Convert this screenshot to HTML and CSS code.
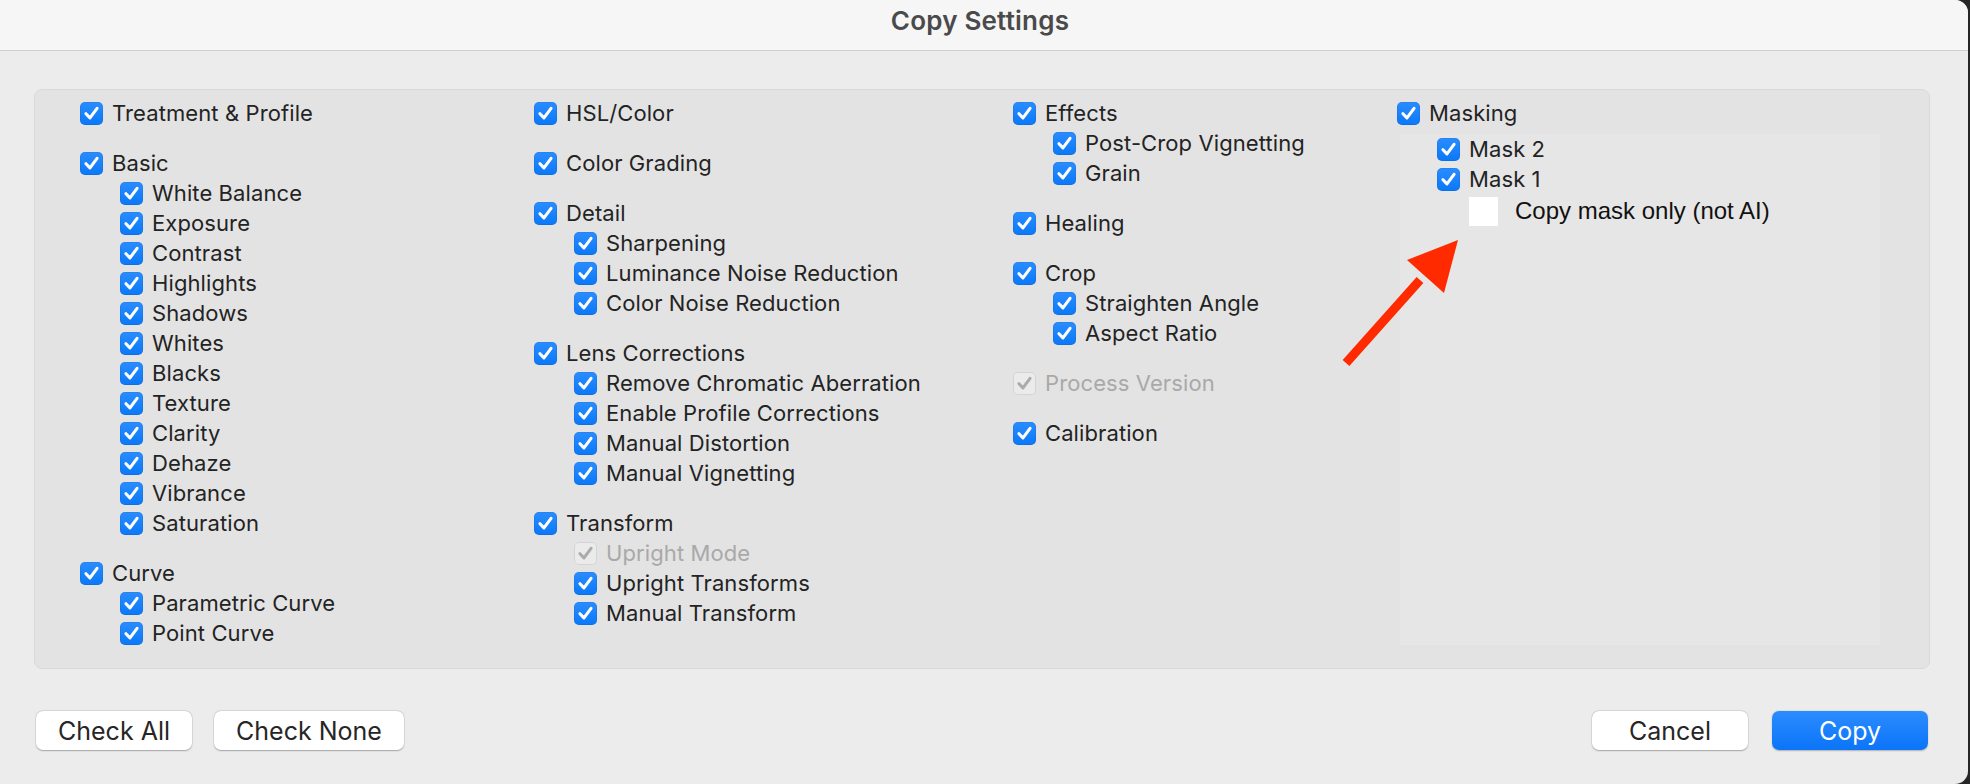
FILE: index.html
```html
<!DOCTYPE html>
<html>
<head>
<meta charset="utf-8">
<link rel="stylesheet" href="styles.css">
</head>
<body>
<div class="window">
  <div class="titlebar"><span class="title">Copy Settings</span></div>
  <div class="content">
    <div class="panel">
      <div class="col">
        <div class="group">
          <div class="row"><span class="cb"><svg viewBox="0 0 24 24"><path d="M6.2 12.2 L10.4 16.6 L17.8 6.6"/></svg></span><span class="lbl">Treatment &amp; Profile</span></div>
        </div>
        <div class="group">
          <div class="row"><span class="cb"><svg viewBox="0 0 24 24"><path d="M6.2 12.2 L10.4 16.6 L17.8 6.6"/></svg></span><span class="lbl">Basic</span></div>
          <div class="sub">
            <div class="row"><span class="cb"><svg viewBox="0 0 24 24"><path d="M6.2 12.2 L10.4 16.6 L17.8 6.6"/></svg></span><span class="lbl">White Balance</span></div>
            <div class="row"><span class="cb"><svg viewBox="0 0 24 24"><path d="M6.2 12.2 L10.4 16.6 L17.8 6.6"/></svg></span><span class="lbl">Exposure</span></div>
            <div class="row"><span class="cb"><svg viewBox="0 0 24 24"><path d="M6.2 12.2 L10.4 16.6 L17.8 6.6"/></svg></span><span class="lbl">Contrast</span></div>
            <div class="row"><span class="cb"><svg viewBox="0 0 24 24"><path d="M6.2 12.2 L10.4 16.6 L17.8 6.6"/></svg></span><span class="lbl">Highlights</span></div>
            <div class="row"><span class="cb"><svg viewBox="0 0 24 24"><path d="M6.2 12.2 L10.4 16.6 L17.8 6.6"/></svg></span><span class="lbl">Shadows</span></div>
            <div class="row"><span class="cb"><svg viewBox="0 0 24 24"><path d="M6.2 12.2 L10.4 16.6 L17.8 6.6"/></svg></span><span class="lbl">Whites</span></div>
            <div class="row"><span class="cb"><svg viewBox="0 0 24 24"><path d="M6.2 12.2 L10.4 16.6 L17.8 6.6"/></svg></span><span class="lbl">Blacks</span></div>
            <div class="row"><span class="cb"><svg viewBox="0 0 24 24"><path d="M6.2 12.2 L10.4 16.6 L17.8 6.6"/></svg></span><span class="lbl">Texture</span></div>
            <div class="row"><span class="cb"><svg viewBox="0 0 24 24"><path d="M6.2 12.2 L10.4 16.6 L17.8 6.6"/></svg></span><span class="lbl">Clarity</span></div>
            <div class="row"><span class="cb"><svg viewBox="0 0 24 24"><path d="M6.2 12.2 L10.4 16.6 L17.8 6.6"/></svg></span><span class="lbl">Dehaze</span></div>
            <div class="row"><span class="cb"><svg viewBox="0 0 24 24"><path d="M6.2 12.2 L10.4 16.6 L17.8 6.6"/></svg></span><span class="lbl">Vibrance</span></div>
            <div class="row"><span class="cb"><svg viewBox="0 0 24 24"><path d="M6.2 12.2 L10.4 16.6 L17.8 6.6"/></svg></span><span class="lbl">Saturation</span></div>
          </div>
        </div>
        <div class="group">
          <div class="row"><span class="cb"><svg viewBox="0 0 24 24"><path d="M6.2 12.2 L10.4 16.6 L17.8 6.6"/></svg></span><span class="lbl">Curve</span></div>
          <div class="sub">
            <div class="row"><span class="cb"><svg viewBox="0 0 24 24"><path d="M6.2 12.2 L10.4 16.6 L17.8 6.6"/></svg></span><span class="lbl">Parametric Curve</span></div>
            <div class="row"><span class="cb"><svg viewBox="0 0 24 24"><path d="M6.2 12.2 L10.4 16.6 L17.8 6.6"/></svg></span><span class="lbl">Point Curve</span></div>
          </div>
        </div>
      </div>

      <div class="col">
        <div class="group">
          <div class="row"><span class="cb"><svg viewBox="0 0 24 24"><path d="M6.2 12.2 L10.4 16.6 L17.8 6.6"/></svg></span><span class="lbl">HSL/Color</span></div>
        </div>
        <div class="group">
          <div class="row"><span class="cb"><svg viewBox="0 0 24 24"><path d="M6.2 12.2 L10.4 16.6 L17.8 6.6"/></svg></span><span class="lbl">Color Grading</span></div>
        </div>
        <div class="group">
          <div class="row"><span class="cb"><svg viewBox="0 0 24 24"><path d="M6.2 12.2 L10.4 16.6 L17.8 6.6"/></svg></span><span class="lbl">Detail</span></div>
          <div class="sub">
            <div class="row"><span class="cb"><svg viewBox="0 0 24 24"><path d="M6.2 12.2 L10.4 16.6 L17.8 6.6"/></svg></span><span class="lbl">Sharpening</span></div>
            <div class="row"><span class="cb"><svg viewBox="0 0 24 24"><path d="M6.2 12.2 L10.4 16.6 L17.8 6.6"/></svg></span><span class="lbl">Luminance Noise Reduction</span></div>
            <div class="row"><span class="cb"><svg viewBox="0 0 24 24"><path d="M6.2 12.2 L10.4 16.6 L17.8 6.6"/></svg></span><span class="lbl">Color Noise Reduction</span></div>
          </div>
        </div>
        <div class="group">
          <div class="row"><span class="cb"><svg viewBox="0 0 24 24"><path d="M6.2 12.2 L10.4 16.6 L17.8 6.6"/></svg></span><span class="lbl">Lens Corrections</span></div>
          <div class="sub">
            <div class="row"><span class="cb"><svg viewBox="0 0 24 24"><path d="M6.2 12.2 L10.4 16.6 L17.8 6.6"/></svg></span><span class="lbl">Remove Chromatic Aberration</span></div>
            <div class="row"><span class="cb"><svg viewBox="0 0 24 24"><path d="M6.2 12.2 L10.4 16.6 L17.8 6.6"/></svg></span><span class="lbl">Enable Profile Corrections</span></div>
            <div class="row"><span class="cb"><svg viewBox="0 0 24 24"><path d="M6.2 12.2 L10.4 16.6 L17.8 6.6"/></svg></span><span class="lbl">Manual Distortion</span></div>
            <div class="row"><span class="cb"><svg viewBox="0 0 24 24"><path d="M6.2 12.2 L10.4 16.6 L17.8 6.6"/></svg></span><span class="lbl">Manual Vignetting</span></div>
          </div>
        </div>
        <div class="group">
          <div class="row"><span class="cb"><svg viewBox="0 0 24 24"><path d="M6.2 12.2 L10.4 16.6 L17.8 6.6"/></svg></span><span class="lbl">Transform</span></div>
          <div class="sub">
            <div class="row disabled"><span class="cb"><svg viewBox="0 0 24 24"><path d="M6.2 12.2 L10.4 16.6 L17.8 6.6"/></svg></span><span class="lbl">Upright Mode</span></div>
            <div class="row"><span class="cb"><svg viewBox="0 0 24 24"><path d="M6.2 12.2 L10.4 16.6 L17.8 6.6"/></svg></span><span class="lbl">Upright Transforms</span></div>
            <div class="row"><span class="cb"><svg viewBox="0 0 24 24"><path d="M6.2 12.2 L10.4 16.6 L17.8 6.6"/></svg></span><span class="lbl">Manual Transform</span></div>
          </div>
        </div>
      </div>

      <div class="col">
        <div class="group">
          <div class="row"><span class="cb"><svg viewBox="0 0 24 24"><path d="M6.2 12.2 L10.4 16.6 L17.8 6.6"/></svg></span><span class="lbl">Effects</span></div>
          <div class="sub">
            <div class="row"><span class="cb"><svg viewBox="0 0 24 24"><path d="M6.2 12.2 L10.4 16.6 L17.8 6.6"/></svg></span><span class="lbl">Post-Crop Vignetting</span></div>
            <div class="row"><span class="cb"><svg viewBox="0 0 24 24"><path d="M6.2 12.2 L10.4 16.6 L17.8 6.6"/></svg></span><span class="lbl">Grain</span></div>
          </div>
        </div>
        <div class="group">
          <div class="row"><span class="cb"><svg viewBox="0 0 24 24"><path d="M6.2 12.2 L10.4 16.6 L17.8 6.6"/></svg></span><span class="lbl">Healing</span></div>
        </div>
        <div class="group">
          <div class="row"><span class="cb"><svg viewBox="0 0 24 24"><path d="M6.2 12.2 L10.4 16.6 L17.8 6.6"/></svg></span><span class="lbl">Crop</span></div>
          <div class="sub">
            <div class="row"><span class="cb"><svg viewBox="0 0 24 24"><path d="M6.2 12.2 L10.4 16.6 L17.8 6.6"/></svg></span><span class="lbl">Straighten Angle</span></div>
            <div class="row"><span class="cb"><svg viewBox="0 0 24 24"><path d="M6.2 12.2 L10.4 16.6 L17.8 6.6"/></svg></span><span class="lbl">Aspect Ratio</span></div>
          </div>
        </div>
        <div class="group">
          <div class="row disabled"><span class="cb"><svg viewBox="0 0 24 24"><path d="M6.2 12.2 L10.4 16.6 L17.8 6.6"/></svg></span><span class="lbl">Process Version</span></div>
        </div>
        <div class="group">
          <div class="row"><span class="cb"><svg viewBox="0 0 24 24"><path d="M6.2 12.2 L10.4 16.6 L17.8 6.6"/></svg></span><span class="lbl">Calibration</span></div>
        </div>
      </div>

      <div class="col col-mask">
        <div class="row"><span class="cb"><svg viewBox="0 0 24 24"><path d="M6.2 12.2 L10.4 16.6 L17.8 6.6"/></svg></span><span class="lbl">Masking</span></div>
        <div class="maskbox">
          <div class="row"><span class="cb"><svg viewBox="0 0 24 24"><path d="M6.2 12.2 L10.4 16.6 L17.8 6.6"/></svg></span><span class="lbl">Mask 2</span></div>
          <div class="row"><span class="cb"><svg viewBox="0 0 24 24"><path d="M6.2 12.2 L10.4 16.6 L17.8 6.6"/></svg></span><span class="lbl">Mask 1</span></div>
          <div class="row-plain"><span class="whitebox"></span><span class="plain-lbl">Copy mask only (not AI)</span></div>
        </div>
      </div>
    </div>
  </div>
  <div class="footer">
    <div class="btns">
      <button class="btn w-all">Check All</button>
      <button class="btn w-none">Check None</button>
    </div>
    <div class="btns">
      <button class="btn w-std">Cancel</button>
      <button class="btn w-std primary">Copy</button>
    </div>
  </div>
  <svg class="arrow" viewBox="0 0 140 145" width="140" height="145">
    <line x1="16" y1="133" x2="90" y2="50" stroke="#ff2a00" stroke-width="9"/>
    <polygon points="128,10 77,30 114,63" fill="#ff2a00"/>
  </svg>
</div>
</body>
</html>
```

FILE: styles.css
```css
* { box-sizing: border-box; }
html, body { margin: 0; padding: 0; }
body {
  background: #262626;
  width: 1970px;
  height: 784px;
  overflow: hidden;
  font-family: "Inter", "Liberation Sans", sans-serif;
}
.window {
  position: relative;
  width: 1968px;
  height: 784px;
  background: #ececec;
  border-top-right-radius: 13px;
  border-bottom-right-radius: 13px;
  overflow: hidden;
  display: flex;
  flex-direction: column;
}
.titlebar {
  height: 51px;
  background: #f6f6f6;
  border-bottom: 1px solid #cfcfcf;
  display: flex;
  justify-content: center;
  padding-top: 5px;
  flex: none;
}
.title {
  font-size: 26px;
  font-weight: 600;
  color: #4a4a4a;
  line-height: 32px;
  padding-right: 8px;
  letter-spacing: 0.2px;
}
.content {
  padding: 38px 38px 0 34px;
  flex: none;
}
.panel {
  height: 580px;
  background: #e3e3e3;
  border: 1px solid #d9d9d9;
  border-radius: 8px;
  padding: 8px 0 0 45px;
  display: grid;
  grid-template-columns: 454px 479px 384px 1fr;
}
.col { display: flex; flex-direction: column; gap: 20px; }
.group { display: flex; flex-direction: column; }
.sub { padding-left: 40px; display: flex; flex-direction: column; }
.row {
  height: 30px;
  display: flex;
  align-items: center;
  gap: 9px;
}
.cb {
  width: 23px;
  height: 23px;
  border-radius: 5px;
  background: linear-gradient(#2a8dff, #0b78f7);
  box-shadow: inset 0 0 0 0.5px rgba(0,0,0,0.12);
  flex: none;
  display: flex;
}
.cb svg { width: 23px; height: 23px; }
.cb path {
  fill: none;
  stroke: #fff;
  stroke-width: 3.2;
  stroke-linecap: round;
  stroke-linejoin: round;
}
.lbl {
  font-size: 22px;
  color: #232323;
  white-space: nowrap;
  letter-spacing: 0.1px;
}
.disabled .cb {
  background: #ebebeb;
  box-shadow: inset 0 0 0 1px #d4d4d4;
}
.disabled .cb path { stroke: #ababab; }
.disabled .lbl { color: #a9a9a9; }

.col-mask { gap: 6px; }
.maskbox {
  margin-left: 3px;
  width: 480px;
  height: 511px;
  background: #e6e6e6;
  padding-left: 37px;
  display: flex;
  flex-direction: column;
}
.row-plain {
  height: 34px;
  display: flex;
  align-items: center;
  padding-left: 32px;
  gap: 17px;
}
.whitebox {
  width: 29px;
  height: 29px;
  background: #ffffff;
  flex: none;
}
.plain-lbl {
  font-family: "Liberation Sans", Arial, sans-serif;
  font-size: 24px;
  color: #111;
  white-space: nowrap;
}
.footer {
  display: flex;
  justify-content: space-between;
  padding: 42px 40px 0 36px;
}
.btns { display: flex; gap: 22px; }
.btns + .btns { gap: 24px; }
.btn {
  height: 39px;
  border: none;
  border-radius: 7px;
  background: #ffffff;
  box-shadow: 0 0.5px 1.5px rgba(0,0,0,0.28), 0 0 0 0.5px rgba(0,0,0,0.08);
  font-family: "Inter", "Liberation Sans", sans-serif;
  font-size: 25px;
  color: #262626;
  padding: 0;
}
.w-all { width: 156px; }
.w-none { width: 190px; }
.w-std { width: 156px; }
.primary {
  background: linear-gradient(#2b8cff, #0b74f8);
  color: #fff;
  box-shadow: 0 0.5px 1.5px rgba(0,0,0,0.25);
}
.arrow {
  position: absolute;
  left: 1330px;
  top: 230px;
}
```
